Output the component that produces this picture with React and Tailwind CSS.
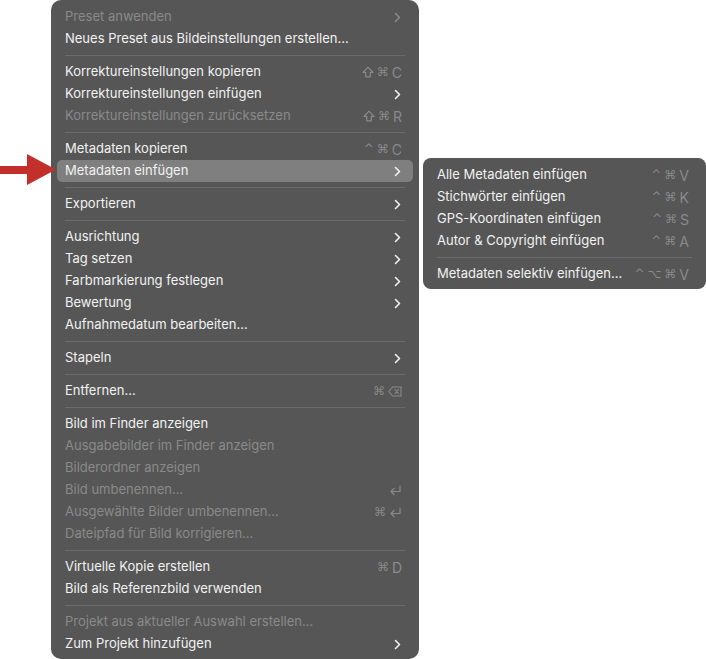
import React from "react";

const FONT = { fontFamily: 'Inter, "Noto Sans", "DejaVu Sans", sans-serif' };
const SYM = { fontFamily: '"DejaVu Sans", sans-serif' };

function Chevron({ enabled }) {
  return (
    <svg width="7" height="11" viewBox="0 0 7 11" className="shrink-0 mr-[1px]">
      <path
        d="M1.5 1.5 L5.5 5.5 L1.5 9.5"
        fill="none"
        stroke={enabled ? "#f2f2f2" : "#8a8a8a"}
        strokeWidth="1.6"
        strokeLinecap="round"
        strokeLinejoin="round"
      />
    </svg>
  );
}

function ReturnIcon() {
  return (
    <svg width="13" height="11" viewBox="0 0 13 11" className="shrink-0">
      <path
        d="M11 1 V6.5 H2 M5 3.5 L2 6.5 L5 9.5"
        fill="none"
        stroke="#8a8a8a"
        strokeWidth="1.2"
        strokeLinecap="round"
        strokeLinejoin="round"
      />
    </svg>
  );
}

function ShiftIcon() {
  return (
    <svg width="12" height="12" viewBox="0 0 12 12" className="shrink-0">
      <path
        d="M6 1.2 L11 6.3 H8.3 V10.8 H3.7 V6.3 H1 Z"
        fill="none"
        stroke="#8a8a8a"
        strokeWidth="1.2"
        strokeLinejoin="round"
      />
    </svg>
  );
}

function DeleteIcon() {
  return (
    <svg width="14" height="11" viewBox="0 0 14 11" className="shrink-0">
      <path
        d="M4.5 1 H13 V10 H4.5 L0.8 5.5 Z"
        fill="none"
        stroke="#8a8a8a"
        strokeWidth="1.1"
        strokeLinejoin="round"
      />
      <path d="M7 3.5 L10.5 7.5 M10.5 3.5 L7 7.5" stroke="#8a8a8a" strokeWidth="1.1" strokeLinecap="round" />
    </svg>
  );
}

function Shortcut({ keys }) {
  return (
    <div className="flex items-center gap-[3px] text-[13px] text-[#8a8a8a]">
      {keys.map((k, i) => {
        if (k === "ret") return <ReturnIcon key={i} />;
        if (k === "del") return <DeleteIcon key={i} />;
        if (k === "⇧") return <ShiftIcon key={i} />;
        const isSym = ["⌘", "^", "⌥"].includes(k);
        return (
          <span key={i} style={isSym ? SYM : FONT} className={isSym ? "text-[12px]" : "text-[14px]"}>
            {k}
          </span>
        );
      })}
    </div>
  );
}

function Row({ label, disabled, sub, keys, active }) {
  return (
    <div
      className={
        "h-[22px] flex items-center justify-between pl-[8px] pr-[11px] rounded-[5px] " +
        (active ? "bg-[#7f7f7f]" : "")
      }
    >
      <span className={"text-[13px] " + (disabled ? "text-[#8a8a8a]" : "text-[#f2f2f2]")} style={FONT}>
        {label}
      </span>
      {sub ? <Chevron enabled={!disabled} /> : keys ? <Shortcut keys={keys} /> : null}
    </div>
  );
}

function Sep() {
  return (
    <div className="h-[11px] flex items-center px-[8px]">
      <div className="h-px w-full bg-[#6b6b6b]" />
    </div>
  );
}

const main = [
  { label: "Preset anwenden", disabled: true, sub: true },
  { label: "Neues Preset aus Bildeinstellungen erstellen..." },
  "sep",
  { label: "Korrektureinstellungen kopieren", keys: ["⇧", "⌘", "C"] },
  { label: "Korrektureinstellungen einfügen", sub: true },
  { label: "Korrektureinstellungen zurücksetzen", disabled: true, keys: ["⇧", "⌘", "R"] },
  "sep",
  { label: "Metadaten kopieren", keys: ["^", "⌘", "C"] },
  { label: "Metadaten einfügen", sub: true, active: true },
  "sep",
  { label: "Exportieren", sub: true },
  "sep",
  { label: "Ausrichtung", sub: true },
  { label: "Tag setzen", sub: true },
  { label: "Farbmarkierung festlegen", sub: true },
  { label: "Bewertung", sub: true },
  { label: "Aufnahmedatum bearbeiten..." },
  "sep",
  { label: "Stapeln", sub: true },
  "sep",
  { label: "Entfernen...", keys: ["⌘", "del"] },
  "sep",
  { label: "Bild im Finder anzeigen" },
  { label: "Ausgabebilder im Finder anzeigen", disabled: true },
  { label: "Bilderordner anzeigen", disabled: true },
  { label: "Bild umbenennen...", disabled: true, keys: ["ret"] },
  { label: "Ausgewählte Bilder umbenennen...", disabled: true, keys: ["⌘", "ret"] },
  { label: "Dateipfad für Bild korrigieren...", disabled: true },
  "sep",
  { label: "Virtuelle Kopie erstellen", keys: ["⌘", "D"] },
  { label: "Bild als Referenzbild verwenden" },
  "sep",
  { label: "Projekt aus aktueller Auswahl erstellen...", disabled: true },
  { label: "Zum Projekt hinzufügen", sub: true },
];

const subItems = [
  { label: "Alle Metadaten einfügen", keys: ["^", "⌘", "V"] },
  { label: "Stichwörter einfügen", keys: ["^", "⌘", "K"] },
  { label: "GPS-Koordinaten einfügen", keys: ["^", "⌘", "S"] },
  { label: "Autor & Copyright einfügen", keys: ["^", "⌘", "A"] },
  "sep",
  { label: "Metadaten selektiv einfügen...", keys: ["^", "⌥", "⌘", "V"] },
];

export default function App() {
  return (
    <div className="relative w-[706px] h-[659px] bg-white overflow-hidden flex items-start pl-[51px]">
      <div className="w-[368px] h-[659px] bg-[#565656] rounded-[10px] px-[6px] pt-[6px] pb-[3px] flex flex-col">
        {main.map((it, i) => (it === "sep" ? <Sep key={i} /> : <Row key={i} {...it} />))}
      </div>
      <div className="ml-[4px] mt-[158px] w-[283px] bg-[#565656] rounded-[8px] px-[6px] pt-[6px] pb-[4px] flex flex-col">
        {subItems.map((it, i) => (it === "sep" ? <Sep key={i} /> : <Row key={i} {...it} />))}
      </div>
      <svg className="absolute left-0 top-[154px]" width="58" height="32" viewBox="0 0 58 32">
        <path d="M0 12 H27 V0 L56 15.5 L27 31 V20 H0 Z" fill="#c3302b" />
      </svg>
    </div>
  );
}
